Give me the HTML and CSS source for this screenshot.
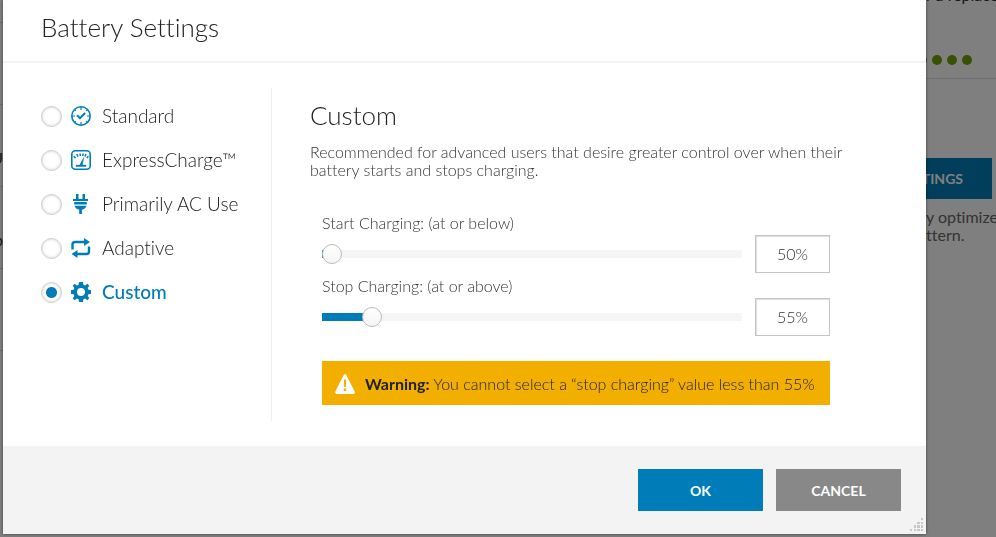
FILE: index.html
```html
<!DOCTYPE html>
<html lang="en">
<head>
<meta charset="utf-8">
<title>Battery Settings</title>
<link rel="stylesheet" href="styles.css">
</head>
<body>
<div class="page">
  <div class="rail">
    <div class="rail-row rail-first"></div>
    <div class="rail-row"></div>
    <div class="rail-row rail-label">U</div>
    <div class="rail-row rail-label">p</div>
    <div class="rail-row"></div>
  </div>
  <div class="summary">
    <p class="summary-note">r a replace</p>
    <div class="health"><i></i><i></i><i></i><i></i></div>
    <button class="summary-button" type="button">TINGS</button>
    <p class="summary-text">y optimize<br>ttern.</p>
  </div>
</div>
<div class="backdrop"></div>

<form class="modal" role="dialog" aria-labelledby="title">
  <header class="modal-header"><h1 id="title">Battery Settings</h1></header>
  <div class="modal-body">
    <div class="modes">
      <label class="mode"><input type="radio" name="mode">
        <svg viewBox="0 0 20 20" fill="none" stroke="currentColor"><circle cx="10" cy="10" r="9.2" stroke-width="1.6"/><path d="M10 1v3M10 16v3M1 10h3M16 10h3M3.900 3.900l1 1M15.100 15.100l1 1M3.900 16.100l1-1M15.100 4.900l1-1" stroke-width="1.2"/><path d="M6 9.200l3 3L14.200 7" stroke-width="2"/></svg>
        <span>Standard</span></label>
      <label class="mode"><input type="radio" name="mode">
        <svg viewBox="0 0 20 20" fill="none" stroke="currentColor"><rect x=".8" y=".8" width="18.400" height="18.400" rx="3.500" stroke-width="1.600"/><path d="M2.800 6.200l1.900 1.900M5.800 4l1.200 2.600M9 3.500l.4 2.500M11.800 6l.4-2.500M14 6.600L15 4M15.800 8.100l1.600-1.900" stroke-width="1.500"/><path d="M4.800 15.800h10.400" stroke-width="1.800"/><path d="M8.600 15.500L10 12.500 12.800 7.500l-1 5.500-.4 2.500z" fill="currentColor" stroke-width=".4"/></svg>
        <span>ExpressCharge™</span></label>
      <label class="mode"><input type="radio" name="mode">
        <svg viewBox="0 0 20 20" fill="currentColor"><path d="M5 0h2.500v5h4V0H14v5h3v2H2V5h3zM3.200 8h12.600v2.600H3.200zM3.500 11.700h12c-.8 2.300-2.400 3.700-4.600 4.100V20H8.200v-4.200c-2.300-.4-3.900-1.800-4.700-4.100z"/></svg>
        <span>Primarily AC Use</span></label>
      <label class="mode"><input type="radio" name="mode">
        <svg viewBox="0 0 20 20"><path d="M1.500 11.500V6.500Q1.500 4 4 4H14M18 8.500v5Q18 16 15.500 16H6" fill="none" stroke="currentColor" stroke-width="2.400"/><path d="M13 0l6 4-6 4zM6.500 12v8l-6-4z" fill="currentColor"/></svg>
        <span>Adaptive</span></label>
      <label class="mode"><input type="radio" name="mode" checked>
        <svg viewBox="0 0 20 20" fill="currentColor" fill-rule="evenodd"><path d="M8 0h4l.4 2.700 1.700.7L16.300 1.800l2 2-1.600 2.200.7 1.700 2.600.4v3.800l-2.600.4-.7 1.700 1.600 2.200-2 2-2.200-1.600-1.700.7L12 20H8l-.4-2.700-1.700-.7-2.200 1.600-2-2L3.300 14l-.7-1.700L0 11.900V8.100l2.600-.4L3.300 6 1.700 3.800l2-2 2.200 1.600 1.700-.7zM10 6a4 4 0 1 0 0 8a4 4 0 1 0 0-8z"/></svg>
        <span>Custom</span></label>
    </div>
    <section class="detail">
      <h2>Custom</h2>
      <p class="intro">Recommended for advanced users that desire greater control over when their battery starts and stops charging.</p>
      <div class="controls">
        <div class="control">
          <div class="track">
            <label for="start">Start Charging: (at or below)</label>
            <input id="start" type="range" min="50" max="100" value="50" style="--fill:0%">
          </div>
          <input class="value" type="text" value="50%" aria-label="Start charging value">
        </div>
        <div class="control">
          <div class="track">
            <label for="stop">Stop Charging: (at or above)</label>
            <input id="stop" type="range" min="50" max="100" value="55" style="--fill:10%">
          </div>
          <input class="value" type="text" value="55%" aria-label="Stop charging value">
        </div>
        <div class="warning" role="alert">
          <svg viewBox="0 0 20 20"><path d="M8.700 1Q10 -1 11.300 1L19.700 17.500Q20.300 19.800 18 20H2Q-.3 19.800.3 17.500z" fill="#fff"/><path d="M8.800 5.500h2.400l-.4 7.500H9.200zM8.800 14.600h2.400V17H8.800z" fill="#f2af00"/></svg>
          <p><strong>Warning:</strong> You cannot select a “stop charging” value less than 55%</p>
        </div>
      </div>
    </section>
  </div>
  <footer class="modal-footer">
    <button class="button primary" type="submit">OK</button>
    <button class="button" type="button">CANCEL</button>
    <svg class="grip" viewBox="0 0 13 13" fill="#c8c8c8"><path d="M11 0h2v2h-2zM7 4h3v2H7zM11 4h2v2h-2zM4 7h2v3H4zM7 7h3v3H7zM11 7h2v3h-2zM0 11h2v2H0zM4 11h2v2H4zM7 11h3v2H7zM11 11h2v2h-2z"/></svg>
  </footer>
</form>
</body>
</html>
```
FILE: styles.css
```css
* { box-sizing: border-box; }

body {
  margin: 0;
  min-height: 100vh;
  overflow: hidden;
  font-family: "Museo Sans", Lato, sans-serif;
  font-size: 16px;
  font-weight: 300;
  font-variant-ligatures: none;
  line-height: 18px;
  color: #333;
  background: #fff;
}

h1, h2, p { margin: 0; }

/* Page behind the dialog */
.page {
  display: flex;
  justify-content: space-between;
  height: 100vh;
}

.rail { width: 3px; overflow: hidden; }
.rail-row {
  display: flex;
  align-items: center;
  justify-content: flex-end;
  height: 82px;
  border-bottom: 1px solid #ddd;
}
.rail-first { height: 23px; }
.rail-label { padding-top: 24px; font-weight: 400; }

.summary { width: 70px; overflow: hidden; white-space: nowrap; font-weight: 400; }
.summary-note { height: 56px; margin-top: -14px; }
.health {
  display: flex;
  justify-content: flex-end;
  gap: 5px;
  height: 37px;
  padding: 13px 24px 0 0;
  border-bottom: 1px solid #ddd;
}
.health i { flex: none; width: 10px; height: 10px; border-radius: 50%; background: #6ea204; }
.summary-button {
  display: flex;
  align-items: center;
  justify-content: flex-end;
  width: 66px;
  height: 41px;
  margin: 79px 0 9px;
  padding: 0 29px 0 0;
  border: 0;
  background: #007db8;
  color: #fff;
  font: bold 14px Lato, sans-serif;
}
.summary-text { color: #666; }

.backdrop { position: fixed; inset: 0; background: rgba(0, 0, 0, .5); }

/* Dialog */
.modal {
  position: absolute;
  inset: 0 70px 3px 3px;
  display: flex;
  flex-direction: column;
  background: #fff;
  box-shadow: 0 0 3px rgba(0, 0, 0, .5);
}

.modal-header {
  padding: 11px 38px 18px;
  border-bottom: 2px solid #f3f3f3;
}
h1, h2 { color: #222; font-size: 26px; font-weight: 300; line-height: 32px; }

.modal-body { display: flex; flex: 1; padding: 25px 0; }

.modes {
  flex: none;
  width: 269px;
  padding: 6px 0 0 38px;
  border-right: 1px solid #eee;
}
.mode {
  display: flex;
  align-items: center;
  height: 44px;
  font-size: 19px;
  color: #222;
}
.mode input {
  appearance: none;
  width: 21px;
  height: 21px;
  margin: 0 9px 0 0;
  border: 1px solid #ccc;
  border-radius: 50%;
  background: #fff;
  box-shadow: inset 0 0 3px #ccc;
}
.mode input:checked { background: radial-gradient(circle, #007db8 5px, #fff 6px); }
.mode svg { width: 20px; height: 20px; margin-right: 11px; color: #007db8; }
.mode input:checked ~ span { color: #007db8; font-weight: 500; }

.detail { flex: 1; padding: 11px 96px 0 38px; min-width: 0; }
.detail h2 { margin-bottom: 12px; }
.intro { margin-right: -24px; }

.controls { padding: 35px 0 0 12px; }
.control { display: flex; align-items: flex-start; gap: 13px; margin-bottom: 4px; }
.track { flex: 1; height: 59px; }
.track label { display: block; margin-bottom: 12px; }

input[type="range"] {
  appearance: none;
  display: block;
  width: 100%;
  height: 20px;
  margin: 0;
  background: linear-gradient(90deg, #007db8 calc(2px + var(--fill)), #f5f5f5 0) center / 100% 8px no-repeat;
}
input[type="range"]::-webkit-slider-thumb {
  appearance: none;
  width: 20px;
  height: 20px;
  border: 1px solid #bbb;
  border-radius: 50%;
  background: linear-gradient(#fff, #f5f5f5);
}

.value {
  width: 75px;
  height: 38px;
  margin-top: 21px;
  padding: 0 0 2px;
  border: 1px solid #c4c4c4;
  box-shadow: inset 1px 1px 1px #ddd;
  color: #333;
  font: 300 16px Lato, sans-serif;
  text-align: center;
}

.warning {
  display: flex;
  align-items: center;
  gap: 10px;
  height: 44px;
  margin-top: 25px;
  padding: 2px 12px 0 13px;
  background: #f2af00;
  color: #222;
  white-space: nowrap;
}
.warning svg { flex: none; width: 20px; height: 20px; }
.warning strong { font-weight: 700; }

.modal-footer {
  position: relative;
  display: flex;
  justify-content: flex-end;
  gap: 13px;
  padding: 23px 25px;
  background: #f3f3f3;
}
.button {
  width: 125px;
  height: 42px;
  padding: 0;
  border: 0;
  background: #888;
  color: #fff;
  font: bold 14px Lato, sans-serif;
}
.button.primary { background: #007db8; }
.grip { position: absolute; right: 3px; bottom: 3px; width: 13px; height: 13px; }
```
